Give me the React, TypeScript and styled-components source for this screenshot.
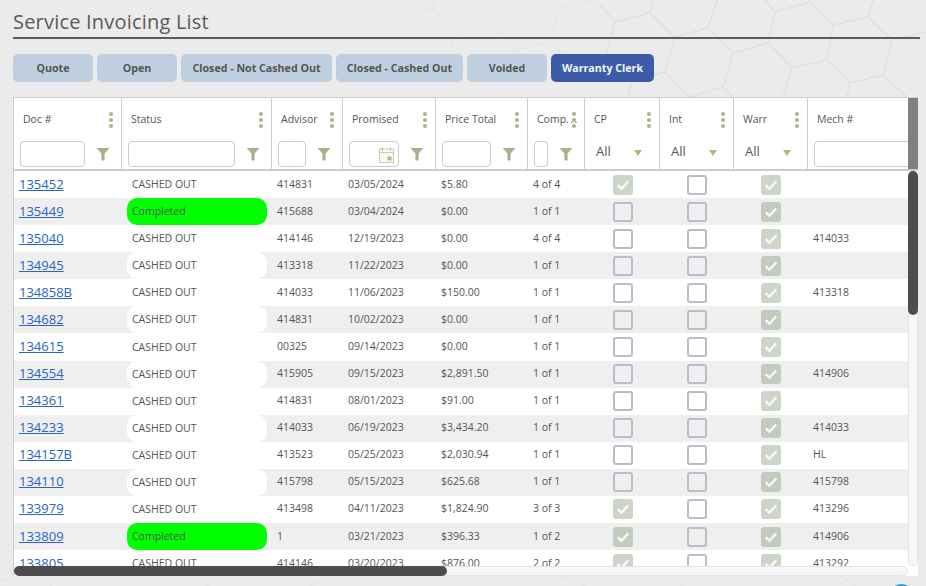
import React from 'react';
import styled, { createGlobalStyle } from 'styled-components';

const GlobalStyle = createGlobalStyle`
  html, body {
    margin: 0;
    padding: 0;
    height: 586px;
    overflow: hidden;
    background: #ebebeb;
    font-family: "Open Sans", "Liberation Sans", sans-serif;
    color: #555;
  }
`;

const COLUMNS = '108px 150px 71px 93px 92px 57px 75px 74px 74px 110px';

const Page = styled.div`
  position: relative;
  height: 586px;
  padding: 9px 6px 0 13px;
  box-sizing: border-box;
  overflow: hidden;
`;

const HexBackground = styled.svg`
  position: absolute;
  inset: 0;
  width: 926px;
  height: 586px;
  fill: none;
  stroke-width: 1.3;
`;

const Title = styled.h1`
  position: relative;
  margin: 0;
  height: 28px;
  line-height: 26px;
  font-size: 20px;
  font-weight: 400;
  color: #5a5a5a;
  letter-spacing: 0.2px;
  border-bottom: 2px solid #5c5c5c;
  width: 907px;
`;

const Tabs = styled.div`
  position: relative;
  display: flex;
  gap: 4px;
  margin-top: 15px;
`;

const Tab = styled.button<{ $width: number; $active?: boolean }>`
  width: ${(p) => p.$width}px;
  height: 28px;
  padding: 0 0 1px;
  border: none;
  border-radius: 5px;
  font-family: inherit;
  font-size: 10.67px;
  font-weight: 700;
  background: ${(p) => (p.$active ? '#3c5ca9' : '#c0cfe0')};
  color: ${(p) => (p.$active ? '#f4f6fb' : '#555')};
`;

const TableWrap = styled.div`
  position: relative;
  width: 905px;
  height: 479px;
  margin-top: 15px;
  box-sizing: border-box;
  border-top: 1px solid #ccc;
  border-left: 1px solid #ccc;
  background: #fff;
  overflow: hidden;
`;

const HeaderRow = styled.div`
  display: grid;
  grid-template-columns: ${COLUMNS};
  height: 73px;
  box-sizing: border-box;
  border-bottom: 2px solid #ccc;
  background: #fff;
`;

const HeaderCell = styled.div`
  display: flex;
  flex-direction: column;
  border-right: 1px solid #ccc;
  box-sizing: border-box;
  min-width: 0;
`;

const HeaderTop = styled.div`
  position: relative;
  display: flex;
  align-items: center;
  height: 43px;
  box-sizing: border-box;
  padding: 0 0 2px 9px;
  font-size: 10.5px;
  white-space: nowrap;
`;

const Ellipsis = styled.span`
  letter-spacing: 1.4px;
`;

const Kebab = styled.span`
  position: absolute;
  right: 8.5px;
  top: 14px;
  display: flex;
  flex-direction: column;
  gap: 2.5px;

  i {
    display: block;
    width: 3.5px;
    height: 3.5px;
    border-radius: 50%;
    background: #b5b48f;
  }
`;

const FilterRow = styled.div`
  display: flex;
  align-items: center;
  height: 26px;
  padding-left: 6px;
`;

const FilterInput = styled.div`
  position: relative;
  flex: 1;
  height: 26px;
  box-sizing: border-box;
  min-width: 0;
  border: 1px solid #ccc;
  border-radius: 4px;
  background: #fff;
`;

const FunnelBox = styled.div`
  flex: none;
  width: 36px;
  display: flex;
  justify-content: center;
  padding-right: 1px;
  box-sizing: border-box;
`;

const CalendarSlot = styled.div`
  position: absolute;
  right: 4px;
  top: 5px;
  line-height: 0;
`;

const SelectFilter = styled.div`
  position: relative;
  height: 26px;
  padding-left: 11px;
  font-size: 13px;
  line-height: 20px;
`;

const Caret = styled.span`
  position: absolute;
  left: 48.5px;
  top: 9px;
  width: 0;
  height: 0;
  border-left: 4.5px solid transparent;
  border-right: 4.5px solid transparent;
  border-top: 6px solid #b5b48f;
`;

const Row = styled.div<{ $alt: boolean }>`
  display: grid;
  grid-template-columns: ${COLUMNS};
  height: 27.08px;
  align-items: center;
  font-size: 10.5px;
  background: ${(p) => (p.$alt ? '#efefef' : '#fff')};
`;

const Cell = styled.div`
  padding: 0 0 2px 5px;
  white-space: nowrap;
`;

const DocLink = styled.a`
  font-size: 13px;
  color: #2a62c8;
  text-decoration: underline;
`;

const StatusPill = styled.div<{ $done: boolean }>`
  margin: 0 5px;
  height: 27px;
  line-height: 27px;
  padding-left: 5px;
  border-radius: 10px;
  background: ${(p) => (p.$done ? '#00ff00' : '#fff')};
`;

const CheckCell = styled.div`
  display: flex;
  justify-content: center;
`;

const Check = styled.span<{ $on: boolean }>`
  display: flex;
  align-items: center;
  justify-content: center;
  width: 20px;
  height: 20px;
  box-sizing: border-box;
  border-radius: 3px;
  border: ${(p) => (p.$on ? 'none' : '2px solid #b9bccb')};
  background: ${(p) => (p.$on ? 'rgba(116, 138, 106, 0.36)' : 'transparent')};
`;

const VBarHead = styled.div`
  position: absolute;
  right: 0;
  top: 0;
  width: 10px;
  height: 71px;
  background: #808080;
`;

const VBarTrack = styled.div`
  position: absolute;
  right: 0;
  top: 73px;
  bottom: 10px;
  width: 10px;
  box-sizing: border-box;
  background: #f7f7f7;
  border: 1px solid #e4e4e4;
  border-radius: 5px;
`;

const VBarThumb = styled.div`
  position: absolute;
  right: 0;
  top: 73px;
  width: 10px;
  height: 144px;
  border-radius: 5px;
  background: #4d4d4d;
`;

const HBarTrack = styled.div`
  position: absolute;
  left: 0;
  bottom: 0;
  width: 894px;
  height: 10px;
  box-sizing: border-box;
  background: #f7f7f7;
  border: 1px solid #e4e4e4;
  border-radius: 5px;
`;

const HBarThumb = styled.div`
  position: absolute;
  left: 0;
  bottom: 0;
  width: 433px;
  height: 10px;
  border-radius: 5px;
  background: #4d4d4d;
`;

const Corner = styled.div`
  position: absolute;
  right: 0;
  bottom: 0;
  width: 10px;
  height: 10px;
  background: #fff;
`;

const HelpBubble = styled.div`
  position: absolute;
  left: 889px;
  top: 584px;
  width: 25px;
  height: 25px;
  border-radius: 50%;
  background: #1ea7dc;
`;

const Funnel = () => (
  <svg width="14" height="14" viewBox="0 0 14 14">
    <path d="M0.5 1h13L8.6 6.6V13.5H5.4V6.6z" fill="#aeae8c" />
  </svg>
);

const Calendar = () => (
  <svg width="15" height="16" viewBox="0 0 15 16" fill="none">
    <rect x="0.5" y="2" width="14" height="13.5" fill="#fbfbf2" stroke="#c9cdb0" />
    <path d="M0.5 5.5h14" stroke="#b5d3de" />
    <path d="M3.5 0.5v3M11.5 0.5v3" stroke="#b5b48f" />
    <rect x="8.5" y="9.5" width="4" height="4" fill="#b5b48f" />
  </svg>
);

const Tick = () => (
  <svg width="14" height="12" viewBox="0 0 14 12" fill="none">
    <path d="M1.8 6.2l3.6 3.6L12.2 2.4" stroke="rgba(255,255,255,0.85)" strokeWidth="2.4" />
  </svg>
);

const Dots = () => (
  <Kebab>
    <i />
    <i />
    <i />
  </Kebab>
);

type Invoice = {
  doc: string;
  status: string;
  advisor: string;
  promised: string;
  total: string;
  comp: string;
  cp: boolean;
  mech: string;
};

const invoices: Invoice[] = [
  { doc: '135452', status: 'CASHED OUT', advisor: '414831', promised: '03/05/2024', total: '$5.80', comp: '4 of 4', cp: true, mech: '' },
  { doc: '135449', status: 'Completed', advisor: '415688', promised: '03/04/2024', total: '$0.00', comp: '1 of 1', cp: false, mech: '' },
  { doc: '135040', status: 'CASHED OUT', advisor: '414146', promised: '12/19/2023', total: '$0.00', comp: '4 of 4', cp: false, mech: '414033' },
  { doc: '134945', status: 'CASHED OUT', advisor: '413318', promised: '11/22/2023', total: '$0.00', comp: '1 of 1', cp: false, mech: '' },
  { doc: '134858B', status: 'CASHED OUT', advisor: '414033', promised: '11/06/2023', total: '$150.00', comp: '1 of 1', cp: false, mech: '413318' },
  { doc: '134682', status: 'CASHED OUT', advisor: '414831', promised: '10/02/2023', total: '$0.00', comp: '1 of 1', cp: false, mech: '' },
  { doc: '134615', status: 'CASHED OUT', advisor: '00325', promised: '09/14/2023', total: '$0.00', comp: '1 of 1', cp: false, mech: '' },
  { doc: '134554', status: 'CASHED OUT', advisor: '415905', promised: '09/15/2023', total: '$2,891.50', comp: '1 of 1', cp: false, mech: '414906' },
  { doc: '134361', status: 'CASHED OUT', advisor: '414831', promised: '08/01/2023', total: '$91.00', comp: '1 of 1', cp: false, mech: '' },
  { doc: '134233', status: 'CASHED OUT', advisor: '414033', promised: '06/19/2023', total: '$3,434.20', comp: '1 of 1', cp: false, mech: '414033' },
  { doc: '134157B', status: 'CASHED OUT', advisor: '413523', promised: '05/25/2023', total: '$2,030.94', comp: '1 of 1', cp: false, mech: 'HL' },
  { doc: '134110', status: 'CASHED OUT', advisor: '415798', promised: '05/15/2023', total: '$625.68', comp: '1 of 1', cp: false, mech: '415798' },
  { doc: '133979', status: 'CASHED OUT', advisor: '413498', promised: '04/11/2023', total: '$1,824.90', comp: '3 of 3', cp: true, mech: '413296' },
  { doc: '133809', status: 'Completed', advisor: '1', promised: '03/21/2023', total: '$396.33', comp: '1 of 2', cp: true, mech: '414906' },
  { doc: '133805', status: 'CASHED OUT', advisor: '414146', promised: '03/20/2023', total: '$876.00', comp: '2 of 2', cp: true, mech: '413292' },
];

const tabs = [
  { label: 'Quote', width: 80 },
  { label: 'Open', width: 80 },
  { label: 'Closed - Not Cashed Out', width: 151 },
  { label: 'Closed - Cashed Out', width: 127 },
  { label: 'Voided', width: 80 },
  { label: 'Warranty Clerk', width: 103, active: true },
];

const textColumns = ['Doc #', 'Status', 'Advisor', 'Promised', 'Price Total', 'Comp'];
const checkColumns = ['CP', 'Int', 'Warr'];

const App: React.FC = () => {
  return (
    <Page>
      <GlobalStyle />
      <HexBackground viewBox="0 0 926 586">
        <path
          stroke="#dfdfdf"
          d="M600 5l15 17 35-9 3-13M650 13l25 24 33-9 9-28M708 28l25 25 35-10 7-31-10-12M775 12l35-10 23 23 35-8 5-17M868 17l24 23 34-8M892 40l-9 35-33 8-23-23 6-35M768 43l24 25 35-8M883 75l24 22M850 83l-3 14M792 68l-9 29M733 53l-10 34-33 10M723 87l10 10M675 37l-10 35 25 25M665 72l-32 8-6 17M615 22l-10 35"
        />
        <path
          stroke="#e6e6e6"
          d="M593 0l-35 8-8-8M558 8l-8 34-35 8-25-27 7-23M490 23l-35 10-23-25 3-8M432 8l-37 10-15-18M395 18l-7 25M455 33l-7 30M515 50l-8 25M550 42l27 25M448 63l32 14"
        />
        <path
          stroke="#e4e4e4"
          d="M0 540l8 6 5-4M0 582l13-6M60 576l-10 10M180 576l30 10M310 586l20-10M560 576l25 10M700 576l-20 10M840 576l15 10"
        />
      </HexBackground>
      <Title>Service Invoicing List</Title>
      <Tabs>
        {tabs.map((tab) => (
          <Tab key={tab.label} $width={tab.width} $active={tab.active}>
            {tab.label}
          </Tab>
        ))}
      </Tabs>
      <TableWrap>
        <HeaderRow>
          {textColumns.map((label) => (
            <HeaderCell key={label}>
              <HeaderTop>
                {label}
                {label === 'Comp' && <Ellipsis>...</Ellipsis>}
                <Dots />
              </HeaderTop>
              <FilterRow>
                <FilterInput>
                  {label === 'Promised' && (
                    <CalendarSlot>
                      <Calendar />
                    </CalendarSlot>
                  )}
                </FilterInput>
                <FunnelBox>
                  <Funnel />
                </FunnelBox>
              </FilterRow>
            </HeaderCell>
          ))}
          {checkColumns.map((label) => (
            <HeaderCell key={label}>
              <HeaderTop>
                {label}
                <Dots />
              </HeaderTop>
              <SelectFilter>
                All
                <Caret />
              </SelectFilter>
            </HeaderCell>
          ))}
          <HeaderCell>
            <HeaderTop>Mech #</HeaderTop>
            <FilterRow>
              <FilterInput />
            </FilterRow>
          </HeaderCell>
        </HeaderRow>
        {invoices.map((row, i) => (
          <Row key={row.doc} $alt={i % 2 === 1}>
            <Cell>
              <DocLink href="#">{row.doc}</DocLink>
            </Cell>
            <StatusPill $done={row.status === 'Completed'}>{row.status}</StatusPill>
            <Cell>{row.advisor}</Cell>
            <Cell>{row.promised}</Cell>
            <Cell>{row.total}</Cell>
            <Cell>{row.comp}</Cell>
            <CheckCell>
              <Check $on={row.cp}>{row.cp && <Tick />}</Check>
            </CheckCell>
            <CheckCell>
              <Check $on={false} />
            </CheckCell>
            <CheckCell>
              <Check $on>
                <Tick />
              </Check>
            </CheckCell>
            <Cell>{row.mech}</Cell>
          </Row>
        ))}
        <VBarHead />
        <VBarTrack />
        <VBarThumb />
        <HBarTrack />
        <HBarThumb />
        <Corner />
      </TableWrap>
      <HelpBubble />
    </Page>
  );
};

export default App;
